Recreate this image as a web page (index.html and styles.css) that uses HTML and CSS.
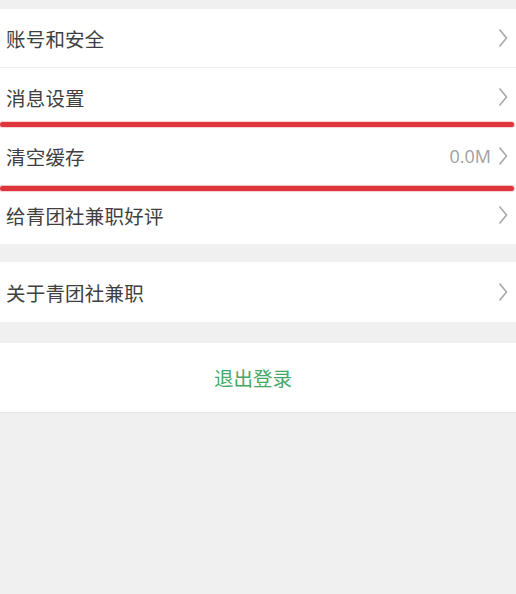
FILE: index.html
```html
<!DOCTYPE html>
<html lang="zh">
<head>
<meta charset="utf-8">
<link rel="stylesheet" href="styles.css">
</head>
<body>
<div class="page">
  <div class="group">
    <div class="row"><span class="label">账号和安全</span><span class="right"><svg class="chev" viewBox="0 0 10 20"><path d="M1.5 1.5 L8.5 10 L1.5 18.5"/></svg></span></div>
    <div class="row"><span class="label">消息设置</span><span class="right"><svg class="chev" viewBox="0 0 10 20"><path d="M1.5 1.5 L8.5 10 L1.5 18.5"/></svg></span></div>
    <div class="row"><span class="label">清空缓存</span><span class="right"><span class="value">0.0M</span><svg class="chev" viewBox="0 0 10 20"><path d="M1.5 1.5 L8.5 10 L1.5 18.5"/></svg></span></div>
    <div class="row"><span class="label">给青团社兼职好评</span><span class="right"><svg class="chev" viewBox="0 0 10 20"><path d="M1.5 1.5 L8.5 10 L1.5 18.5"/></svg></span></div>
  </div>
  <div class="group group-about">
    <div class="row row-about"><span class="label">关于青团社兼职</span><span class="right"><svg class="chev" viewBox="0 0 10 20"><path d="M1.5 1.5 L8.5 10 L1.5 18.5"/></svg></span></div>
  </div>
  <div class="group group-logout">
    <div class="logout">退出登录</div>
  </div>
  <div class="mark mark-top"></div>
  <div class="mark mark-bottom"></div>
</div>
</body>
</html>
```

FILE: styles.css
```css
html, body {
  margin: 0;
  padding: 0;
  background: #f0f0f0;
}
.page {
  position: relative;
  width: 516px;
  height: 594px;
  box-sizing: border-box;
  padding-top: 9px;
  font-family: "Noto Sans CJK SC", "Noto Sans", sans-serif;
}
.group {
  background: #fff;
}
.group-about {
  margin-top: 18px;
}
.group-logout {
  margin-top: 21px;
  border-bottom: 1px solid #e6e6e6;
}
.row {
  display: flex;
  align-items: center;
  justify-content: space-between;
  height: 58px;
  padding: 0 8px 0 6px;
  border-bottom: 1px solid #eeeeee;
}
.row:last-child {
  border-bottom: none;
}
.row-about {
  height: 60px;
}
.label {
  font-size: 19.5px;
  color: #404040;
  letter-spacing: 0.2px;
}
.right {
  display: flex;
  align-items: center;
  gap: 7px;
}
.value {
  font-family: "Open Sans", "Noto Sans", sans-serif;
  font-size: 18px;
  color: #a0a0a0;
}
.chev {
  width: 10px;
  height: 20px;
  fill: none;
  stroke: #a8a8a8;
  stroke-width: 1.6;
}
.logout {
  height: 69px;
  display: flex;
  align-items: center;
  justify-content: center;
  font-size: 19.5px;
  color: #43a964;
  padding-right: 10px;
}
.mark {
  position: absolute;
  left: 0;
  width: 514px;
  height: 5px;
  background: #e0343c;
  border-radius: 3px;
  box-shadow: 0 0 1px 1px rgba(224, 52, 60, 0.25);
}
.mark-top {
  top: 122px;
}
.mark-bottom {
  top: 186px;
}
```
